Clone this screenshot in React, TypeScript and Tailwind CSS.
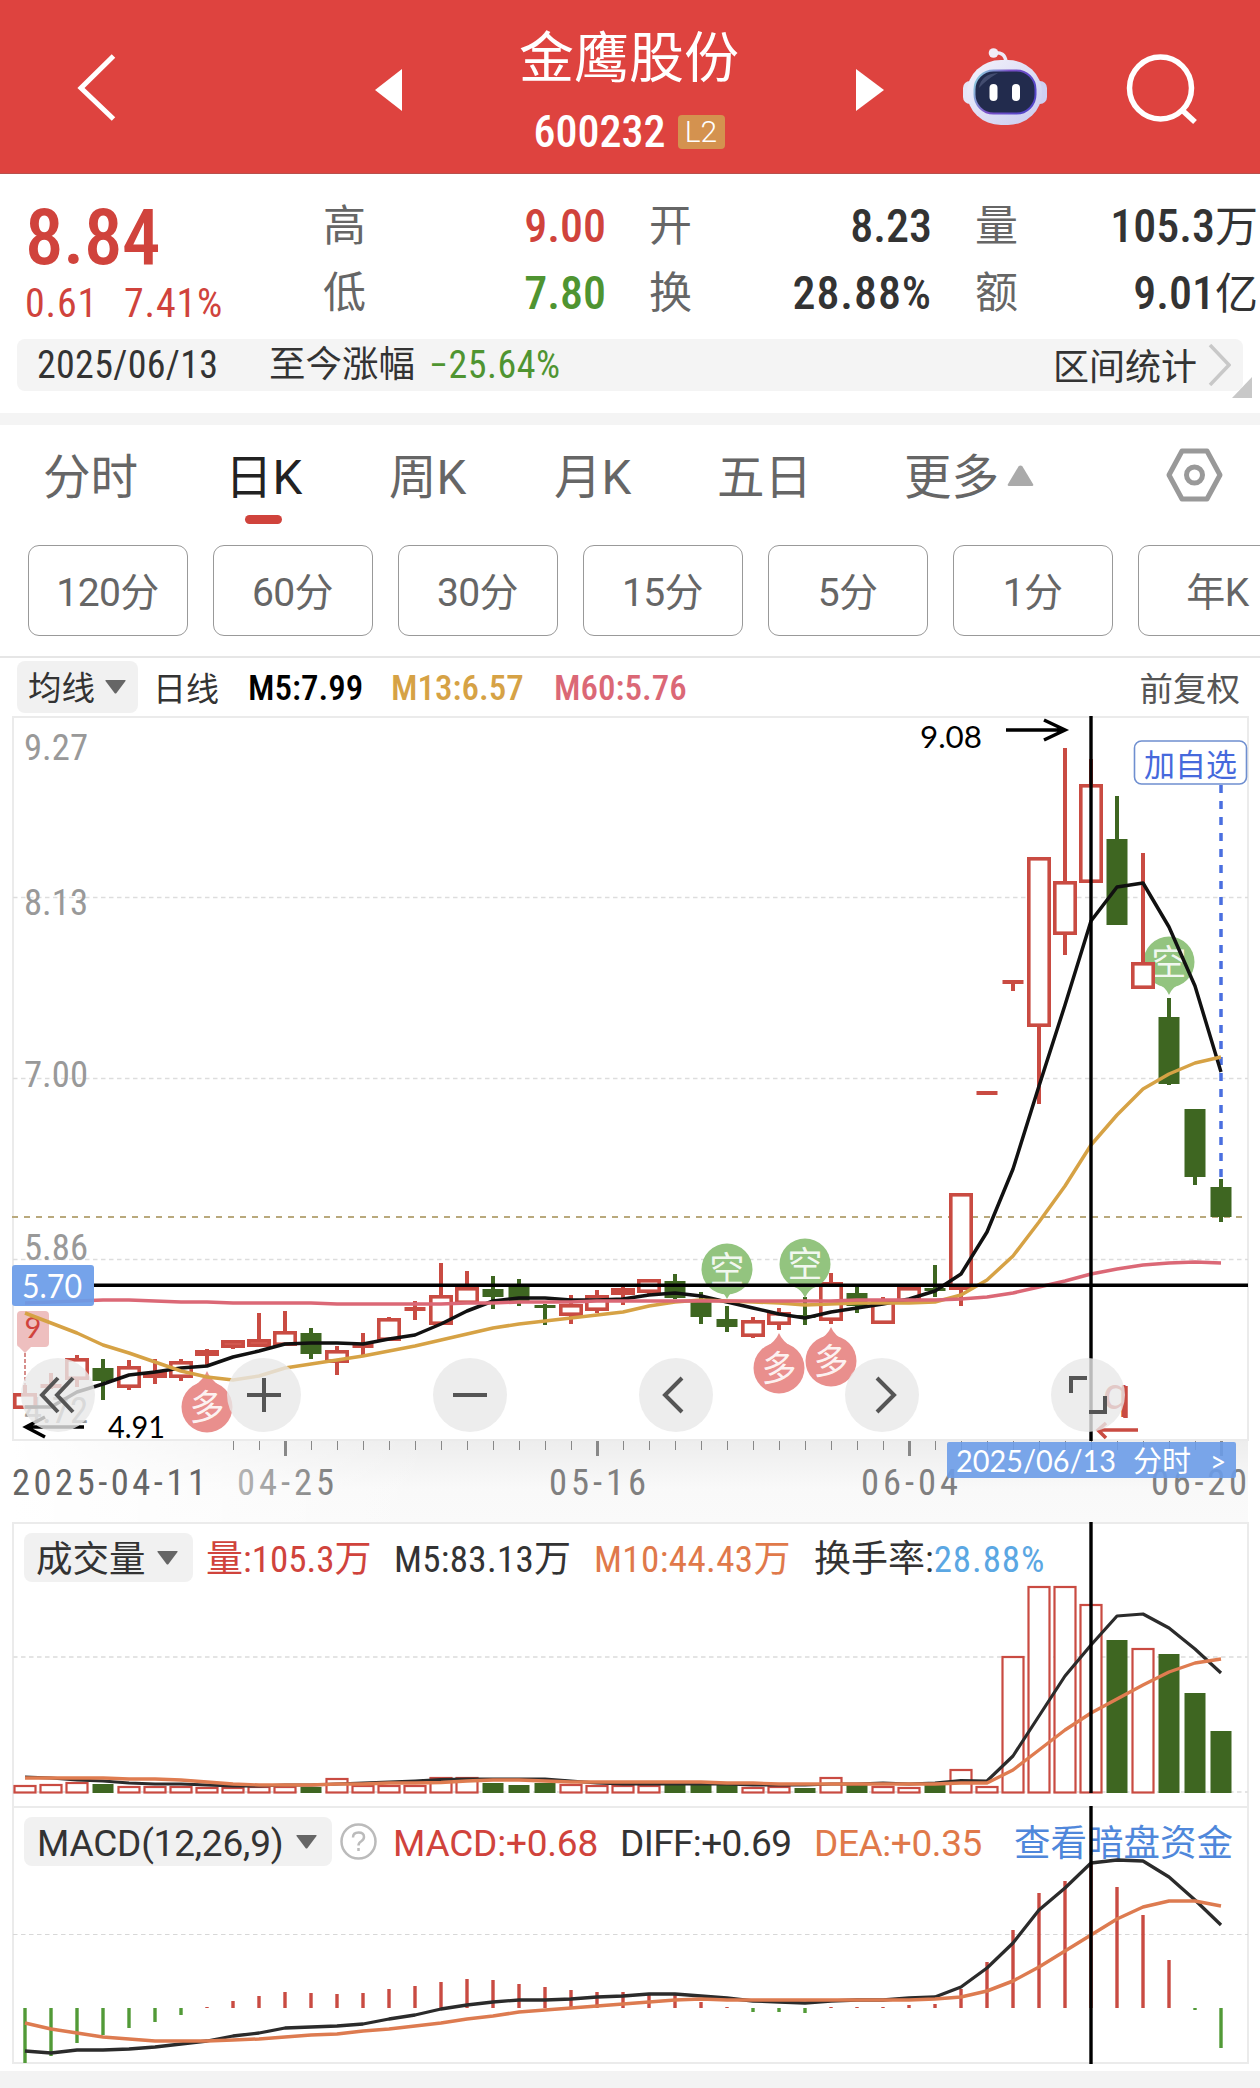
import React from "react";

const RED = "#C94B42";
const GREEN = "#3E6621";

const xAt = (i: number) => 25 + i * 26;

// [body top, body bottom, high, low, isUp]
const candles: [number, number, number, number, number][] = [
	[1393, 1409, 1385, 1409, 1],
	[1384, 1388, 1373, 1389, 1],
	[1358, 1380, 1355, 1387, 1],
	[1368, 1381, 1359, 1400, 0],
	[1366, 1388, 1360, 1390, 1],
	[1372, 1378, 1359, 1384, 1],
	[1361, 1378, 1359, 1381, 1],
	[1350, 1356, 1349, 1365, 1],
	[1340, 1348, 1340, 1349, 1],
	[1339, 1347, 1313, 1347, 1],
	[1331, 1346, 1311, 1346, 1],
	[1333, 1354, 1328, 1359, 0],
	[1350, 1363, 1346, 1375, 1],
	[1343, 1348, 1333, 1355, 1],
	[1318, 1341, 1317, 1341, 1],
	[1307, 1311, 1301, 1320, 1],
	[1295, 1325, 1263, 1325, 1],
	[1287, 1304, 1271, 1304, 1],
	[1289, 1297, 1276, 1309, 0],
	[1285, 1302, 1279, 1306, 0],
	[1305, 1308, 1304, 1325, 0],
	[1304, 1316, 1295, 1324, 1],
	[1295, 1311, 1290, 1313, 1],
	[1288, 1295, 1287, 1305, 1],
	[1279, 1293, 1279, 1295, 1],
	[1281, 1298, 1274, 1299, 0],
	[1302, 1317, 1292, 1324, 0],
	[1319, 1327, 1306, 1332, 0],
	[1320, 1337, 1317, 1338, 1],
	[1312, 1325, 1308, 1330, 1],
	[1315, 1318, 1297, 1325, 0],
	[1282, 1321, 1273, 1324, 1],
	[1293, 1306, 1286, 1313, 0],
	[1300, 1324, 1297, 1324, 1],
	[1287, 1304, 1287, 1304, 1],
	[1288, 1291, 1265, 1297, 0],
	[1193, 1290, 1193, 1306, 1],
	[1091, 1095, 1091, 1095, 1],
	[980, 984, 980, 991, 1],
	[857, 1027, 857, 1104, 1],
	[881, 935, 748, 955, 1],
	[784, 883, 759, 883, 1],
	[839, 925, 796, 925, 0],
	[962, 989, 853, 989, 1],
	[1017, 1084, 998, 1085, 0],
	[1109, 1177, 1109, 1185, 0],
	[1187, 1217, 1179, 1222, 0],
];

const ma5 = [
	1407, 1407, 1392, 1384, 1375, 1372, 1368, 1366, 1357, 1351, 1344, 1343, 1343, 1344, 1339, 1335, 1324, 1311, 1301,
	1298, 1298, 1300, 1300, 1299, 1295, 1293, 1296, 1302, 1308, 1314, 1318, 1312, 1308, 1304, 1299, 1291, 1274, 1232,
	1169, 1086, 1005, 921, 887, 883, 927, 986, 1072,
];
const ma13 = [
	1313, 1323, 1333, 1345, 1353, 1362, 1371, 1377, 1380, 1376, 1368, 1364, 1360, 1356, 1351, 1346, 1340, 1334, 1328,
	1324, 1321, 1318, 1315, 1312, 1306, 1302, 1300, 1301, 1302, 1303, 1305, 1304, 1303, 1303, 1303, 1302, 1295, 1280,
	1256, 1222, 1186, 1145, 1115, 1089, 1074, 1063, 1057,
];
const ma60 = [
	1303, 1302, 1301, 1300, 1300, 1301, 1302, 1302, 1303, 1303, 1303, 1303, 1304, 1304, 1304, 1304, 1304, 1303, 1303,
	1302, 1302, 1302, 1301, 1301, 1301, 1301, 1301, 1301, 1301, 1301, 1301, 1301, 1300, 1300, 1300, 1300, 1299, 1297,
	1293, 1287, 1281, 1274, 1269, 1265, 1263, 1262, 1263,
];

// [top, isUp]
const volumes: [number, number][] = [
	[1785, 1], [1784, 1], [1782, 1], [1784, 0], [1786, 1], [1786, 1], [1786, 1], [1787, 1], [1787, 1], [1786, 1],
	[1786, 1], [1787, 0], [1778, 1], [1785, 1], [1785, 1], [1785, 1], [1777, 1], [1777, 1], [1783, 0], [1785, 0],
	[1783, 0], [1784, 1], [1785, 1], [1785, 1], [1785, 1], [1785, 0], [1785, 0], [1785, 0], [1787, 1], [1786, 1],
	[1788, 0], [1777, 1], [1785, 0], [1786, 1], [1787, 1], [1785, 0], [1769, 1], [1786, 1], [1656, 1], [1586, 1],
	[1586, 1], [1604, 1], [1640, 0], [1648, 1], [1654, 0], [1693, 0], [1731, 0],
];
const vol5 = [
	1777, 1778, 1780, 1781, 1783, 1784, 1784, 1785, 1786, 1786, 1785, 1785, 1784, 1783, 1782, 1781, 1779.5, 1779, 1779,
	1779, 1779, 1781, 1783, 1784, 1784, 1784, 1784, 1784, 1785, 1785, 1785, 1784, 1784, 1783, 1784, 1783, 1780.5, 1781,
	1756, 1716, 1676, 1645, 1616, 1614, 1628, 1649, 1673,
];
const vol10 = [
	1778, 1778, 1778, 1778, 1779, 1779, 1780, 1782, 1784, 1785, 1785, 1785, 1784, 1784, 1783, 1783, 1782.5, 1781, 1780,
	1780, 1781, 1782, 1782, 1782, 1782, 1782, 1782, 1783, 1783, 1784, 1784, 1784, 1784, 1784, 1784, 1784, 1783, 1783,
	1770, 1750, 1730, 1713, 1699, 1685, 1672, 1663, 1659,
];

const macd = [
	2063, 2056, 2043, 2035, 2028, 2022, 2015, 2007, 2001, 1996, 1992, 1993, 1994, 1993, 1989, 1986, 1982, 1979, 1980,
	1984, 1987, 1990, 1992, 1992, 1994, 1995, 2002, 2007, 2012, 2012, 2013, 2007, 2007, 2007, 2005, 2004, 1989, 1962,
	1930, 1893, 1881, 1863, 1887, 1915, 1960, 2010, 2048,
];
const diff = [
	2051, 2053, 2050, 2050, 2049, 2047, 2044, 2041, 2036, 2033, 2028, 2027, 2026, 2024, 2019, 2015, 2009, 2005, 2002,
	2000, 2000, 1999, 1997, 1996, 1994, 1994, 1996, 1998, 2001, 2002, 2003, 2001, 2000, 2000, 1998, 1997, 1987, 1968,
	1943, 1910, 1888, 1863, 1860, 1861, 1877, 1900, 1925,
];
const dea = [
	2023, 2029, 2033, 2037, 2039, 2041, 2041, 2041, 2040, 2039, 2037, 2035, 2034, 2031, 2029, 2026, 2023, 2019, 2016,
	2012, 2010, 2008, 2006, 2004, 2002, 2000, 1999, 2000, 2000, 2000, 2000, 2000, 2000, 2000, 2000, 1999, 1997, 1991,
	1981, 1967, 1951, 1935, 1919, 1907, 1901, 1901, 1906,
];

function Line({ data, color, width = 3.5 }: { data: number[]; color: string; width?: number }) {
	const points = data.map((y, i) => `${xAt(i)},${y}`).join(" ");
	return <polyline points={points} fill="none" stroke={color} strokeWidth={width} strokeLinejoin="round" />;
}

function Candle({ i }: { i: number }) {
	const [top, bottom, high, low, up] = candles[i];
	const x = xAt(i);
	if (!up) {
		return (
			<g fill={GREEN}>
				<rect x={x - 2} y={high} width={4} height={low - high} />
				<rect x={x - 10.5} y={top} width={21} height={bottom - top} />
			</g>
		);
	}
	const thin = bottom - top < 6;
	return (
		<g>
			<rect x={x - 2} y={high} width={4} height={top - high} fill={RED} />
			<rect x={x - 2} y={bottom} width={4} height={low - bottom} fill={RED} />
			{thin ? (
				<rect x={x - 10.5} y={top} width={21} height={bottom - top} fill={RED} />
			) : (
				<rect x={x - 10.2} y={top + 1.8} width={20.4} height={bottom - top - 3.6} fill={bottom - top < 9 ? "#E06A62" : "#fff"} stroke={RED} strokeWidth={3.6} />
			)}
		</g>
	);
}

function Marker({ x, y, tip, label }: { x: number; y: number; tip: number; label: string }) {
	const short = label === "空";
	const dir = tip > y ? -1 : 1;
	return (
		<g>
			<g fill={short ? "#93C47F" : "#E98F8D"}>
				<circle cx={x} cy={y} r={25.5} />
				<path d={`M${x - 14} ${y - dir * 20}Q${x - 3} ${tip + dir * 8} ${x} ${tip}Q${x + 3} ${tip + dir * 8} ${x + 14} ${y - dir * 20}Z`} />
			</g>
			<text x={x} y={y + 13} textAnchor="middle" fontSize={35} fill="#fff" fillOpacity={0.9}>
				{label}
			</text>
		</g>
	);
}

function PriceLabel({ y, children }: { y: number; children: string }) {
	return (
		<text x={24} y={y} fontSize={37.5} textLength={64} lengthAdjust="spacingAndGlyphs" fill="#999" className="font-[450] font-stretch-[80%]">
			{children}
		</text>
	);
}

function DateLabel({ x, width, color, children }: { x: number; width: number; color: string; children: string }) {
	return (
		<text x={x} y={1495} fontSize={36.5} textLength={width} fill={color} className="font-[450] font-stretch-[80%]">
			{children}
		</text>
	);
}

function RoundButton({ x, children }: { x: number; children: React.ReactNode }) {
	return (
		<g>
			<circle cx={x} cy={1395} r={37} fill="#E8E8E8" fillOpacity={0.8} />
			<g transform={`translate(${x} 1395)`} fill="none" stroke="#555" strokeWidth={4}>
				{children}
			</g>
		</g>
	);
}

function PriceChart() {
	return (
		<svg width={1260} height={806} viewBox="0 716 1260 806" className="block">
			<defs>
				<linearGradient id="axisY" x1="0" y1="0" x2="0" y2="1">
					<stop offset="0" stopColor="#EDEDED" />
					<stop offset="0.6" stopColor="#F9F9F9" />
					<stop offset="1" stopColor="#FAFAFA" />
				</linearGradient>
				<linearGradient id="axisX" x1="0" y1="0" x2="1" y2="0">
					<stop offset="0" stopColor="#fff" />
					<stop offset="1" stopColor="#fff" stopOpacity="0" />
				</linearGradient>
				<linearGradient id="dateFade" x1="0" y1="0" x2="1" y2="0">
					<stop offset="0" stopColor="#B5B5B5" />
					<stop offset="1" stopColor="#808080" />
				</linearGradient>
			</defs>

			<rect x={12} y={1440} width={1236} height={82} fill="url(#axisY)" />
			<rect x={12} y={1441} width={420} height={81} fill="url(#axisX)" />
			<rect x={13} y={717} width={1235} height={723} fill="#fff" stroke="#EBEBEB" strokeWidth={2} />

			<g stroke="#DDD" strokeWidth={1.3} strokeDasharray="4.5 3.5">
				<path d="M13 897.5H1248M13 1078.5H1248M13 1259.5H1248" />
			</g>
			<path d="M12 1217H1243" stroke="#B9A97C" strokeWidth={1.8} strokeDasharray="6 6" />

			<PriceLabel y={760}>9.27</PriceLabel>
			<PriceLabel y={915}>8.13</PriceLabel>
			<PriceLabel y={1087}>7.00</PriceLabel>
			<PriceLabel y={1260}>5.86</PriceLabel>
			<PriceLabel y={1423}>4.72</PriceLabel>

			<path d="M1221 785V1180" stroke="#4A6FE0" strokeWidth={3.5} strokeDasharray="8 8" />

			<Marker x={1169} y={962} tip={995} label="空" />
			{candles.map((_, i) => (
				<Candle key={i} i={i} />
			))}
			<Marker x={207} y={1407} tip={1371} label="多" />
			<Marker x={779} y={1368} tip={1333} label="多" />
			<Marker x={831} y={1361} tip={1327} label="多" />
			<Marker x={727} y={1269} tip={1299} label="空" />
			<Marker x={805} y={1264} tip={1298} label="空" />

			{/* nine-turn flag */}
			<path d="M21 1311h24a4 4 0 0 1 4 4v28a4 4 0 0 1-4 4H31l-6 6-6-6a3 3 0 0 1-2-3v-29a4 4 0 0 1 4-4z" fill="#EEBFBF" />
			<path d="M25 1353V1385" stroke="#C96A66" strokeWidth={1.5} strokeDasharray="4 2" />
			<text x={33} y={1338} textAnchor="middle" fontSize={29} fill="#D0433C" className="font-['Lato']">
				9
			</text>

			<Line data={ma5} color="#111" />
			<Line data={ma13} color="#D6A245" />
			<Line data={ma60} color="#DB6876" />

			<path d="M84 1427H27M45 1417L26 1427L45 1437" fill="none" stroke="#000" strokeWidth={3.5} />
			<text x={108} y={1438} fontSize={31} textLength={57} lengthAdjust="spacingAndGlyphs" className="font-['Lato']">
				4.91
			</text>
			<path d="M1006 730H1064M1044 720L1065 730L1044 740" fill="none" stroke="#000" strokeWidth={3.5} />
			<text x={920} y={748} fontSize={31} textLength={62} lengthAdjust="spacingAndGlyphs" className="font-['Lato']">
				9.08
			</text>

			<path d="M1091 716V1441M94 1285.3H1248" stroke="#000" strokeWidth={3.4} />

			<rect x={1134.5} y={741} width={112} height={43} rx={7} fill="#fff" stroke="#6F8FD0" strokeWidth={1.6} />
			<text x={1144} y={776} fontSize={31} textLength={93} fill="#4669DC">
				加自选
			</text>

			<text x={1103} y={1409} fontSize={46} fill={RED} className="font-['Lato']">
				q
			</text>
			<path d="M1125.500 1386V1418" stroke={RED} strokeWidth={4.5} />
			<path d="M1138 1430H1100M1106 1423L1098 1430L1106 1438" fill="none" stroke={RED} strokeWidth={3.5} />

			<RoundButton x={58}>
				<path d="M0 -17L-16 0L0 17M15 -17L-1 0L15 17" />
			</RoundButton>
			<RoundButton x={264}>
				<path d="M-17 0H17M0 -17V17" />
			</RoundButton>
			<RoundButton x={470}>
				<path d="M-17 0H17" />
			</RoundButton>
			<RoundButton x={676}>
				<path d="M6 -17L-11 0L6 17" />
			</RoundButton>
			<RoundButton x={882}>
				<path d="M-5 -17L12 0L-5 17" />
			</RoundButton>
			<RoundButton x={1088}>
				<path d="M-17 -2V-17H-1M1 17H17V1" />
			</RoundButton>

			{/* time axis */}
			{candles.map((_, i) => {
				if (i < 8) return null;
				const major = i % 12 === 10;
				return <rect key={i} x={xAt(i) - (major ? 1 : 0)} y={1441} width={major ? 3 : 1} height={major ? 15 : 9} fill="#888" />;
			})}
			<DateLabel x={12} width={194} color="#666">2025-04-11</DateLabel>
			<DateLabel x={237} width={97} color="url(#dateFade)">04-25</DateLabel>
			<DateLabel x={549} width={97} color="#808080">05-16</DateLabel>
			<DateLabel x={861} width={97} color="#808080">06-04</DateLabel>
			<DateLabel x={1151} width={96} color="#808080">06-20</DateLabel>

			<rect x={947} y={1442} width={289} height={36} rx={2} fill="#6B9CE8" fillOpacity={0.9} />
			<g fill="#fff" fontSize={31} className="font-['Lato','Noto_Sans_CJK_SC']">
				<text x={956} y={1472} textLength={160} lengthAdjust="spacingAndGlyphs">2025/06/13</text>
				<text x={1133} y={1472} fontSize={29}>分时</text>
				<text x={1210} y={1472} fontSize={28}>&gt;</text>
			</g>
			<rect x={12} y={1265} width={82} height={41} rx={3} fill="#6B9CE8" fillOpacity={0.93} />
			<text x={22} y={1298} fontSize={33} textLength={60} lengthAdjust="spacingAndGlyphs" fill="#fff" className="font-['Lato']">
				5.70
			</text>
		</svg>
	);
}

function VolumeChart() {
	return (
		<svg width={1260} height={284} viewBox="0 1522 1260 284" className="absolute left-0 top-0">
			<path d="M13 1806V1523H1248V1806" fill="none" stroke="#EBEBEB" strokeWidth={2} />
			<path d="M13 1657H1248M13 1792H1248" stroke="#E4E4E4" strokeWidth={1.8} strokeDasharray="4.5 3.5" />
			{volumes.map(([top, up], i) =>
				up ? (
					<rect key={i} x={xAt(i) - 10.5} y={top + 1} width={21} height={1792.5 - top - 1} fill="#fff" stroke={RED} strokeWidth={2.2} />
				) : (
					<rect key={i} x={xAt(i) - 10.5} y={top} width={21} height={1793 - top} fill={GREEN} />
				)
			)}
			<Line data={vol5} color="#2B2B2B" width={3.2} />
			<Line data={vol10} color="#DF7C50" width={3.4} />
			<path d="M1091 1521V1793" stroke="#000" strokeWidth={3.4} />
		</svg>
	);
}

function MacdChart() {
	return (
		<svg width={1260} height={265} viewBox="0 1806 1260 265" className="absolute left-0 top-0">
			<rect x={13} y={1807} width={1235} height={256} fill="none" stroke="#EBEBEB" strokeWidth={2} />
			<path d="M13 1934.5H1248" stroke="#D8D8D8" strokeWidth={1.2} strokeDasharray="4.5 3.5" />
			{macd.map((y, i) => (
				<rect key={i} x={xAt(i) - 1.7} y={Math.min(y, 2008)} width={3.4} height={Math.abs(y - 2008)} fill={y > 2008 ? "#529A37" : RED} />
			))}
			<Line data={diff} color="#2B2B2B" width={3.3} />
			<Line data={dea} color="#DD7B50" width={3.5} />
			<path d="M1091 1806V2064" stroke="#000" strokeWidth={3.4} />
		</svg>
	);
}

function Dropdown({ className, children }: { className: string; children: React.ReactNode }) {
	return (
		<button className={`flex items-center justify-between rounded-lg bg-[#f1f1f1] whitespace-nowrap ${className}`}>
			<span className="pt-[3px]">{children}</span>
			<svg width="21" height="14" viewBox="0 0 21 14" fill="#666">
				<path d="M1 0H20Q21 0 20.5 1L11.5 13Q10.5 14 9.5 13L.5 1Q0 0 1 0Z" />
			</svg>
		</button>
	);
}

function Quote({ label, value, unit, color = "text-[#333]" }: { label: string; value: string; unit?: string; color?: string }) {
	return (
		<div className="flex h-[67px] items-center justify-between whitespace-nowrap text-[46px] leading-none">
			<span className="-ml-[2px] pt-[2px] text-[43px] text-[#666]">{label}</span>
			<span className={`font-medium ${value.endsWith("%") ? "tracking-[0.9px]" : ""} ${color}`}>
				{value}
				{unit && <span className="text-[43px] font-normal">{unit}</span>}
			</span>
		</div>
	);
}

function App() {
	return (
		<main className="w-[1260px] h-[2088px] overflow-hidden bg-white font-['Roboto','Noto_Sans_CJK_SC',sans-serif] leading-none">
			<header className="relative flex h-[174px] items-start border-b border-[#b9504c] bg-[#de433f] text-white">
				<svg width="1260" height="173" viewBox="0 0 1260 173" className="absolute inset-0">
					<defs>
						<linearGradient id="shell" x1="0" y1="0" x2="1" y2="1">
							<stop offset="0" stopColor="#F4F3FC" />
							<stop offset="1" stopColor="#C9CBEF" />
						</linearGradient>
						<linearGradient id="rim" x1="0" y1="0" x2="1" y2="0.4">
							<stop offset="0" stopColor="#8EE0E0" />
							<stop offset="0.5" stopColor="#7A50C8" />
							<stop offset="1" stopColor="#5546C8" />
						</linearGradient>
					</defs>
					<path d="M113.500 56L81 88L113.500 119" fill="none" stroke="#fff" strokeWidth="5" />
					<path d="M402 69V111L375 90Z" fill="#fff" />
					<path d="M856 69V111L884 90Z" fill="#fff" />
					<path d="M993 53Q1005 51 1006 62" fill="none" stroke="#EEEAF8" strokeWidth="3.500" />
					<circle cx="993.500" cy="53" r="4.800" fill="#F1ECF8" />
					<rect x="963" y="81" width="16" height="23" rx="7" fill="#E6E6F8" />
					<rect x="1031" y="81" width="16" height="23" rx="7" fill="#CFD0F2" />
					<rect x="967" y="60" width="75" height="65" rx="34" fill="url(#shell)" />
					<rect x="974.500" y="70.500" width="61" height="43" rx="19" fill="#222B4D" stroke="url(#rim)" strokeWidth="2" />
					<path d="M979 88Q981 74 998 73Q986 80 979 88Z" fill="#515B7D" fillOpacity="0.700" />
					<rect x="989.500" y="84" width="8" height="17" rx="4" fill="#fff" />
					<rect x="1012" y="84" width="8" height="17" rx="4" fill="#fff" />
					<circle cx="1160.500" cy="88" r="31" fill="none" stroke="#fff" strokeWidth="5.500" />
					<path d="M1182 110L1195 122" stroke="#fff" strokeWidth="5.500" />
				</svg>
				<div className="flex w-full flex-col items-center pr-[2px]">
					<h1 className="mt-[31px] text-[55px] leading-[54px]">金鹰股份</h1>
					<div className="mt-[30px] flex items-center gap-[12px]">
						<span className="text-[44px] leading-[34px] font-medium font-stretch-[80%]">600232</span>
						<span className="flex h-[34px] w-[47px] items-center justify-center rounded-sm bg-[#d4924f] text-[30px] font-light">L2</span>
					</div>
				</div>
			</header>

			<section className="flex h-[165px] font-stretch-[80%]">
				<div className="w-[325px] pl-[25px] text-[#d0433c]">
					<p className="mt-[26px] text-[77px] font-medium leading-[77px] tracking-[-0.5px]">8.84</p>
					<p className="mt-[5px] flex gap-[26px] text-[40px] leading-[44px] tracking-[0.8px]">
						<span>0.61</span>
						<span>7.41%</span>
					</p>
				</div>
				<div className="grid grid-cols-[281px_281px_281px] content-start gap-x-[45px] pt-[18px]">
					<Quote label="高" value="9.00" color="text-[#d0433c]" />
					<Quote label="开" value="8.23" />
					<Quote label="量" value="105.3" unit="万" />
					<Quote label="低" value="7.80" color="text-[#4f9431]" />
					<Quote label="换" value="28.88%" />
					<Quote label="额" value="9.01" unit="亿" />
				</div>
			</section>

			<section className="relative mx-[17px] flex h-[52px] items-center rounded-lg bg-[#f4f4f4] pl-[20px] text-[37px] text-[#333] font-stretch-[80%]">
				<span className="w-[232px] text-[38px] tracking-[0.3px]">2025/06/13</span>
				<span className="w-[160px] pt-[1px] text-[36.500px]">至今涨幅</span>
				<span className="text-[38px] tracking-[0.5px] text-[#4f9431]">−25.64%</span>
				<span className="mr-[11px] ml-auto pt-[5px] text-[36px]">区间统计</span>
				<svg width="23" height="42" viewBox="0 0 23 42" fill="none" stroke="#c8c8c8" strokeWidth="3.500" className="mr-[12px]">
					<path d="M2 1L21 21L2 41" />
				</svg>
				<svg width="20" height="21" viewBox="0 0 20 21" fill="#c8c8c8" className="absolute -right-[9px] -bottom-[7px]">
					<path d="M20 0V21H0Z" />
				</svg>
			</section>
			<div className="mt-[22px] h-[12px] bg-[#f4f4f4]" />

			<nav className="flex h-[120px] items-start pt-[29px] pl-[43px] text-[47.500px] leading-[48px] text-[#666]">
				<span className="w-[182px]">分时</span>
				<span className="flex w-[164px] flex-col text-[#222]">
					<span>日K</span>
					<span className="mt-[13px] ml-[20px] h-[9px] w-[37px] rounded-full bg-[#d0433c]" />
				</span>
				<span className="w-[165px]">周K</span>
				<span className="w-[163px]">月K</span>
				<span className="w-[187px]">五日</span>
				<span className="flex w-[262px] items-center gap-[8px]">
					更多
					<svg width="27" height="21" viewBox="0 0 27 21" fill="#aaa" className="-mt-[5px]">
						<path d="M11.500 1.500Q13.500 -.5 15.500 1.500L26 19Q27 21 25 21H2Q0 21 1 19Z" />
					</svg>
				</span>
				<svg width="57" height="54" viewBox="0 0 57 54" fill="none" stroke="#999" strokeWidth="5" strokeLinejoin="round" className="-mt-[6px]">
					<path d="M16 3H41L54 27L41 51H16L3 27Z" />
					<circle cx="28.500" cy="27" r="8" />
				</svg>
			</nav>

			<div className="flex gap-[25px] pl-[28px] text-[39px] text-[#666]">
				{["120分", "60分", "30分", "15分", "5分", "1分", "年K"].map((t) => (
					<button key={t} className="h-[91px] w-[160px] shrink-0 rounded-[11px] border-[1.500px] border-[#999] pt-[6px] pr-[1px] tracking-[-0.6px]">
						{t}
					</button>
				))}
			</div>

			<div className="mt-[20px] flex h-[60px] items-start border-t-2 border-[#e6e6e6] pt-[3px] pl-[17px] text-[35px] leading-[52px] text-[#333] font-stretch-[80%]">
				<Dropdown className="h-[52px] w-[121px] pr-[12px] pl-[11px] text-[33.500px]">均线</Dropdown>
				<span className="ml-[15px] w-[95px] pt-[3px] text-[33px]">日线</span>
				<span className="w-[143px] pt-[2px] font-medium text-black">M5:7.99</span>
				<span className="w-[163px] pt-[2px] font-medium text-[#d6a245]">M13:6.57</span>
				<span className="pt-[2px] font-medium text-[#db6876]">M60:5.76</span>
				<span className="mr-[20px] ml-auto pt-[3px] text-[33.500px] text-[#555]">前复权</span>
			</div>

			<PriceChart />

			<section className="relative h-[284px] font-stretch-[80%]">
				<VolumeChart />
				<div className="relative flex h-[60px] items-start pt-[11px] pl-[24px] text-[37px] leading-[49px] whitespace-nowrap text-[#333]">
					<Dropdown className="h-[49px] w-[169px] pr-[15px] pl-[12px] text-[36.500px]">成交量</Dropdown>
					<span className="ml-[13px] w-[188px] pt-[2px] text-[#d0433c]">量:105.3万</span>
					<span className="w-[200px] pt-[2px] tracking-[0.3px]">M5:83.13万</span>
					<span className="w-[220px] pt-[2px] tracking-[0.4px] text-[#e0794a]">M10:44.43万</span>
					<span className="pt-[2px]">换手率:</span>
					<span className="pt-[2px] tracking-[0.9px] text-[#5ba7e3]">28.88%</span>
				</div>
			</section>

			<section className="relative h-[265px]">
				<div className="relative flex h-[60px] items-start pt-[11px] pl-[24px] text-[37px] leading-[49px] whitespace-nowrap text-[#333]">
					<Dropdown className="h-[49px] w-[308px] pr-[15px] pl-[13px] tracking-[-0.2px]">MACD(12,26,9)</Dropdown>
					<svg width="37" height="37" viewBox="0 0 37 37" fill="none" stroke="#bbb" strokeWidth="2.500" className="mt-[6px] ml-[8px]">
						<circle cx="18.500" cy="18.500" r="17" />
						<path d="M13 14.500Q13 9.500 18.500 9.500Q24 9.500 24 14Q24 16.500 21 18.500Q18.500 20 18.500 22.500M18.500 25V28" />
					</svg>
					<span className="ml-[16px] w-[227px] pt-[2px] tracking-[-0.2px] text-[#d0433c]">MACD:+0.68</span>
					<span className="w-[194px] pt-[2px] tracking-[-0.6px]">DIFF:+0.69</span>
					<span className="w-[200px] pt-[2px] tracking-[-0.4px] text-[#e0794a]">DEA:+0.35</span>
					<span className="pt-[2px] text-[36.500px] text-[#4f87db]">查看暗盘资金</span>
				</div>
				<MacdChart />
			</section>
			<div className="h-[17px] bg-[#f3f3f3]" />
		</main>
	);
}

export default App;
